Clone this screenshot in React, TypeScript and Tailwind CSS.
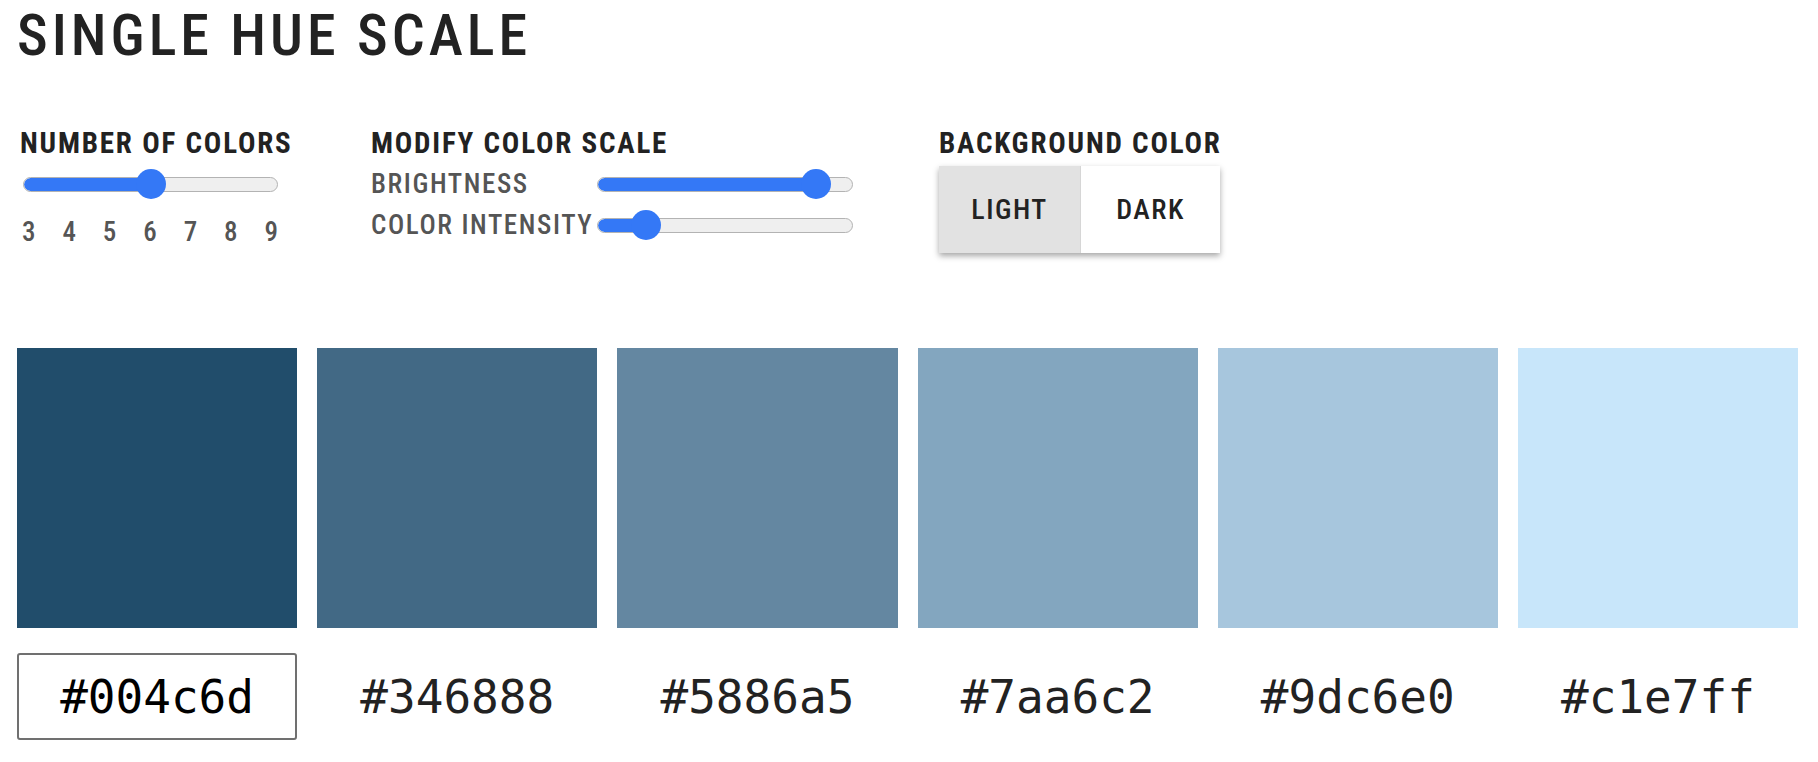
import React from 'react';

interface Swatch {
  bg: string;
  hex: string;
}

const swatches: Swatch[] = [
  { bg: 'bg-[#214d6b]', hex: '#004c6d' },
  { bg: 'bg-[#426985]', hex: '#346888' },
  { bg: 'bg-[#6487a1]', hex: '#5886a5' },
  { bg: 'bg-[#83a6bf]', hex: '#7aa6c2' },
  { bg: 'bg-[#a7c6dd]', hex: '#9dc6e0' },
  { bg: 'bg-[#c8e6fa]', hex: '#c1e7ff' },
];

function Slider({ value }: { value: number }) {
  return (
    <div className="relative h-[30px] w-full flex items-center">
      <div className="relative h-[15px] w-full rounded-full border border-[#b3b3b3] bg-[#efefef] overflow-hidden">
        <div className="h-full bg-[#3478f6] rounded-l-full" style={{ width: `${value}%` }} />
      </div>
      {/* thumb */}
      <div
        className="absolute top-0 h-[30px] w-[30px] -ml-[15px] rounded-full bg-[#3478f6]"
        style={{ left: `${value}%` }}
      />
    </div>
  );
}

const heading = 'whitespace-nowrap text-[29px] leading-none font-bold tracking-[1.8px] text-[#222] [font-stretch:80%]';
const subLabel = 'whitespace-nowrap text-[27px] leading-none font-medium tracking-[1.6px] text-[#555] [font-stretch:80%]';

export default function App() {
  return (
    <div className="min-h-screen bg-white pl-[17px] pr-[20px] [font-family:Roboto,sans-serif]">
      {/* Title */}
      <h1 className="pt-[6px] text-[58px] leading-none font-medium tracking-[4px] text-[#222] [font-stretch:80%]">
        SINGLE HUE SCALE
      </h1>

      {/* Controls */}
      <div className="mt-[65px] flex items-start">
        {/* Number of colors */}
        <div className="w-[274px] shrink-0 pl-[3px]">
          <h3 className={heading}>NUMBER OF COLORS</h3>
          <div className="mt-[11px] w-[258px] pl-[3px]">
            <Slider value={50} />
          </div>
          <div className="mt-[20px] flex w-[258px] justify-between pl-[2px] text-[27px] leading-none font-medium text-[#555] [font-stretch:80%]">
            {[3, 4, 5, 6, 7, 8, 9].map((n) => (
              <span key={n}>{n}</span>
            ))}
          </div>
        </div>

        {/* Modify color scale */}
        <div className="ml-[80px] w-[482px] shrink-0">
          <h3 className={heading}>MODIFY COLOR SCALE</h3>
          <div className="mt-[11px] grid grid-cols-[226px_256px] gap-y-[11px] items-center">
            <span className={subLabel}>BRIGHTNESS</span>
            <Slider value={85.5} />
            <span className={subLabel}>COLOR INTENSITY</span>
            <Slider value={19} />
          </div>
        </div>

        {/* Background color */}
        <div className="ml-[86px] shrink-0">
          <h3 className={heading}>BACKGROUND COLOR</h3>
          <div className="mt-[8px] flex h-[87px] w-[281px] shadow-[0_3px_6px_rgba(0,0,0,0.35)]">
            <button className="flex w-[142px] items-center justify-center bg-[#e2e2e2] border-r border-[#d6d6d6] text-[28px] leading-none font-medium tracking-[1.5px] text-[#222] [font-stretch:80%]">
              LIGHT
            </button>
            <button className="flex flex-1 items-center justify-center bg-white text-[28px] leading-none font-medium tracking-[1.5px] text-[#222] [font-stretch:80%]">
              DARK
            </button>
          </div>
        </div>
      </div>

      {/* Swatches */}
      <div className="mt-[95px] flex gap-[20px]">
        {swatches.map((s, i) => (
          <div key={s.hex} className="flex w-[281px] flex-col">
            <div className={`h-[280px] w-full ${s.bg}`} />
            <div
              className={`mt-[25px] flex h-[87px] items-center justify-center text-[46px] leading-none [font-family:'DejaVu_Sans_Mono',monospace] ${
                i === 0 ? 'rounded-[3px] border-2 border-[#707070] text-black' : 'text-[#222]'
              }`}
            >
              {s.hex}
            </div>
          </div>
        ))}
      </div>
    </div>
  );
}
